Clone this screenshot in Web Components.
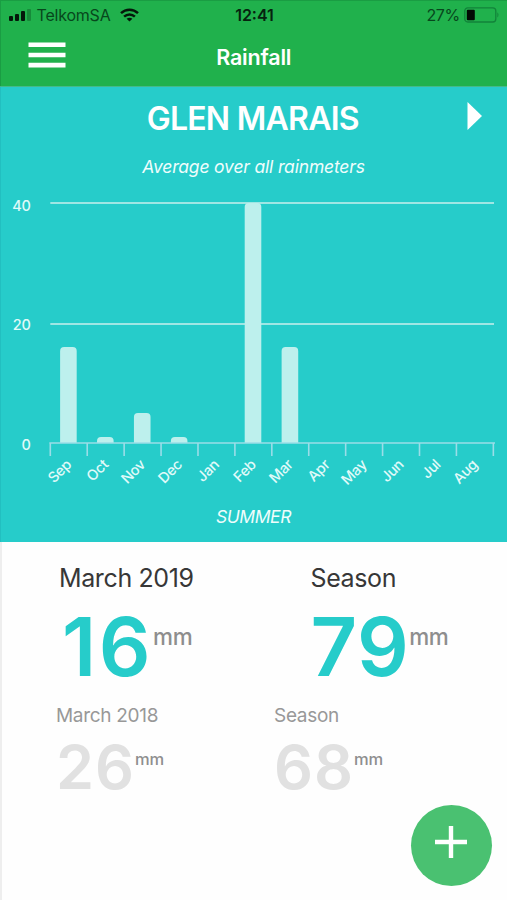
<!DOCTYPE html>
<html lang="en">
<head>
<meta charset="utf-8">
<meta name="viewport" content="width=device-width, initial-scale=1">
<title>Rainfall</title>
<style>
    html, body {
        margin: 0;
        height: 100%;
        overflow: hidden;
        background: #fefefe;
    }
    body {
        font-family: Inter, "Liberation Sans", sans-serif;
    }
</style>
</head>
<body>
<rainfall-app></rainfall-app>
<script>
class StatusBar extends HTMLElement {
    constructor() {
        super();
        this.attachShadow({mode: 'open'}).innerHTML = `
        <style>
            :host {
                display: grid;
                grid-template-columns: 1fr auto 1fr;
                align-items: center;
                height: 30px;
                padding: 0 7px 0 9px;
                box-sizing: border-box;
                font-size: 16px;
                line-height: 30px;
                color: #07471c;
            }
            .left, .right {
                display: flex;
                align-items: center;
            }
            .right {
                justify-content: flex-end;
                gap: 4px;
                letter-spacing: -0.3px;
            }
            .carrier {
                margin: 0 9px 0 5.5px;
                letter-spacing: -0.2px;
            }
            .time {
                font-weight: 600;
                color: #06230f;
            }
        </style>
        <div class="left">
            <svg width="22" height="14" viewBox="0 0 22 14">
                <g fill="#04170a">
                    <rect x="0" y="8" width="4" height="5" rx="1"/>
                    <rect x="6" y="6" width="4" height="7" rx="1"/>
                    <rect x="12" y="3" width="4" height="10" rx="1"/>
                </g>
                <rect x="18" y="1" width="4" height="12" rx="1" fill="#178a3a"/>
            </svg>
            <span class="carrier"><slot name="carrier"></slot></span>
            <svg width="19" height="14" viewBox="0 0 19 14" fill="none" stroke="#04170a" stroke-width="2.5">
                <path d="M1 5.2C5.8 .6 13.2 .6 18 5.2"/>
                <path d="M4.1 8.6C7.2 5.7 11.8 5.7 14.9 8.6"/>
                <path d="M9.5 13.6L6.6 10.7C8.3 9.3 10.7 9.3 12.4 10.7Z" fill="#04170a" stroke="none"/>
            </svg>
        </div>
        <span class="time"><slot name="time"></slot></span>
        <div class="right">
            <span><slot name="battery"></slot></span>
            <svg width="36" height="16" viewBox="0 0 36 16">
                <rect x=".8" y=".8" width="31" height="14.2" rx="3" fill="none" stroke="#12833a" stroke-width="1.3"/>
                <rect x="2.8" y="2.8" width="8" height="10.4" rx="1" fill="#020a04"/>
                <path d="M33.4 5.2q2.2 2.6 0 5.2z" fill="#12833a"/>
            </svg>
        </div>`;
    }
}

class NavBar extends HTMLElement {
    constructor() {
        super();
        this.attachShadow({mode: 'open'}).innerHTML = `
        <style>
            :host {
                display: grid;
                grid-template-columns: 1fr auto 1fr;
                height: 56px;
                padding: 0 27.5px 0 28px;
                color: #fff;
            }
            svg {
                margin-top: 12px;
            }
            h1 {
                margin: 12px 0 0;
                font-size: 21.5px;
                line-height: 30px;
                font-weight: 600;
                letter-spacing: -0.2px;
            }
        </style>
        <svg width="38" height="26" viewBox="0 0 38 26" fill="#fff">
            <path d="M.5 .5h37v4.6H.5zM.5 10.7h37v4.6H.5zM.5 20.8h37v4.6H.5z"/>
        </svg>
        <h1><slot></slot></h1>`;
    }
}

class RainChart extends HTMLElement {
    constructor() {
        super();
        this.shadow = this.attachShadow({mode: 'open'});
    }
    connectedCallback() {
        this.render();
    }
    get values() {
        return this.getAttribute('values').split(',').map(Number);
    }
    render() {
        const months = ['Sep', 'Oct', 'Nov', 'Dec', 'Jan', 'Feb', 'Mar', 'Apr', 'May', 'Jun', 'Jul', 'Aug'];
        const left = 50.3;
        const step = 36.92;
        const base = 253;
        const scale = 6;
        const grid = [20, 40].map(v => {
            const y = base - v * scale + (v === 20 ? 1 : 0);
            return `<path d="M${left} ${y}H494" stroke="#9fe6e4" stroke-width="2"/>`;
        }).join('');
        const bars = this.values.map((v, i) => {
            if (!v) {
                return '';
            }
            const x = left + i * step + 9.8;
            const top = base - v * scale;
            const r = Math.min(4, v * scale);
            return `<path d="M${x} ${base}V${top + r}q0-${r} ${r}-${r}h${16.6 - 2 * r}q${r} 0 ${r} ${r}V${base}z" fill="#bdf0ed"/>`;
        }).join('');
        let ticks = `M${left - 1} ${base}H495`;
        for (let i = 0; i <= 12; i++) {
            ticks += `M${left + i * step} ${base}v13`;
        }
        const labels = months.map((m, i) => {
            const x = left + i * step + 22;
            return `<text text-anchor="end" transform="translate(${x} 275.5) rotate(-45)">${m}</text>`;
        }).join('');
        this.shadow.innerHTML = `
        <style>
            :host {
                display: block;
                height: 310px;
            }
            svg {
                display: block;
            }
            text {
                font-size: 14.5px;
                font-weight: 500;
                letter-spacing: -0.3px;
                fill: #e0faf9;
            }
        </style>
        <svg width="507" height="310" viewBox="0 0 507 310">
            ${grid}
            ${bars}
            <path d="${ticks}" fill="none" stroke="#9bdde8" stroke-width="1.6"/>
            <text x="30.5" y="20.5" text-anchor="end">40</text>
            <text x="30.5" y="139.5" text-anchor="end">20</text>
            <text x="30.5" y="259.5" text-anchor="end">0</text>
            ${labels}
        </svg>`;
    }
}

class RainPanel extends HTMLElement {
    constructor() {
        super();
        this.attachShadow({mode: 'open'}).innerHTML = `
        <style>
            :host {
                display: flex;
                flex-direction: column;
                height: 456px;
                box-sizing: border-box;
                border-top: 1px solid #44b98a;
                background: #26ccca;
                box-shadow: inset 1px 0 #22bfc0;
                color: #fff;
                text-align: center;
            }
            header {
                display: grid;
                grid-template-columns: 1fr auto 1fr;
                padding: 12px 24px 0;
            }
            h2 {
                grid-column: 2;
                margin: 0 1.5px 0 0;
                font-size: 32px;
                line-height: 40px;
                font-weight: 600;
                letter-spacing: -0.75px;
            }
            svg {
                justify-self: end;
                margin-top: 3px;
            }
            .sub, .season {
                font-size: 17.5px;
                line-height: 24px;
                font-style: italic;
                color: #effdfc;
            }
            .sub {
                margin: 16px 0 11px;
                letter-spacing: -0.17px;
            }
            .season {
                margin-top: 5px;
                letter-spacing: -0.4px;
            }
        </style>
        <header>
            <h2><slot name="place"></slot></h2>
            <svg width="16" height="28" viewBox="0 0 16 28"><path d="M.5 0L15 14L.5 28z" fill="#fff"/></svg>
        </header>
        <div class="sub"><slot name="sub"></slot></div>
        <rain-chart values="16,1,5,1,0,40,16,0,0,0,0,0"></rain-chart>
        <div class="season"><slot name="season"></slot></div>`;
    }
}

class RainStat extends HTMLElement {
    constructor() {
        super();
        this.attachShadow({mode: 'open'}).innerHTML = `
        <style>
            :host {
                display: block;
                color: #373737;
            }
            .label {
                font-size: 25px;
                line-height: 30px;
                letter-spacing: -0.38px;
            }
            .row {
                display: flex;
                align-items: flex-start;
                margin-top: 14px;
            }
            .value {
                padding-left: var(--value-indent, 0);
                font-size: 81px;
                line-height: 80px;
                font-weight: 600;
                color: #26ccca;
                letter-spacing: var(--value-spacing, 0.5px);
            }
            .unit {
                margin-top: 18px;
                font-size: 22.5px;
                line-height: 24px;
                font-weight: 500;
                letter-spacing: -0.4px;
                color: #8e8e8e;
            }
            :host([previous]) .label {
                font-size: 19px;
                line-height: 24px;
                letter-spacing: -0.3px;
                color: #989898;
            }
            :host([previous]) .row {
                margin-top: 9px;
            }
            :host([previous]) .value {
                font-size: 61px;
                line-height: 60px;
                color: #e1e1e1;
            }
            :host([previous]) .unit {
                margin-top: 13px;
                font-size: 16.5px;
                line-height: 18px;
                letter-spacing: -0.3px;
            }
        </style>
        <div class="label"><slot name="label"></slot></div>
        <div class="row">
            <span class="value"><slot></slot></span>
            <span class="unit">mm</span>
        </div>`;
    }
}

class AddButton extends HTMLElement {
    constructor() {
        super();
        this.attachShadow({mode: 'open'}).innerHTML = `
        <style>
            :host {
                display: block;
                width: 81px;
                height: 81px;
                border-radius: 50%;
                background: #4ac171;
            }
            svg {
                display: block;
            }
        </style>
        <svg width="81" height="81" viewBox="0 0 81 81">
            <path d="M24 37h32M40 21v32" stroke="#fff" stroke-width="4.4"/>
        </svg>`;
    }
}

class RainfallApp extends HTMLElement {
    constructor() {
        super();
        this.attachShadow({mode: 'open'}).innerHTML = `
        <style>
            :host {
                display: block;
                position: relative;
                width: 507px;
                height: 900px;
                overflow: hidden;
                box-shadow: inset 2px 0 #eee;
            }
            .top {
                background: #20b14c;
                box-shadow: inset 1px 1px #1a9d43;
            }
            .stats {
                display: grid;
                grid-template-columns: 251.5px 1fr;
                padding: 20.5px 0 0 59px;
            }
            .stats.previous {
                grid-template-columns: 218px 1fr;
                padding: 17.5px 0 0 56px;
            }
            .month {
                --value-indent: 3px;
                --value-spacing: 2.5px;
            }
            .previous rain-stat {
                --value-spacing: 1px;
            }
            add-button {
                position: absolute;
                right: 15px;
                bottom: 14px;
            }
        </style>
        <div class="top">
            <status-bar>
                <span slot="carrier">TelkomSA</span>
                <span slot="time">12:41</span>
                <span slot="battery">27%</span>
            </status-bar>
            <nav-bar>Rainfall</nav-bar>
        </div>
        <rain-panel>
            <span slot="place">GLEN MARAIS</span>
            <span slot="sub">Average over all rainmeters</span>
            <span slot="season">SUMMER</span>
        </rain-panel>
        <div class="stats">
            <rain-stat class="month"><span slot="label">March 2019</span>16</rain-stat>
            <rain-stat><span slot="label">Season</span>79</rain-stat>
        </div>
        <div class="stats previous">
            <rain-stat previous><span slot="label">March 2018</span>26</rain-stat>
            <rain-stat previous><span slot="label">Season</span>68</rain-stat>
        </div>
        <add-button></add-button>`;
    }
}

customElements.define('status-bar', StatusBar);
customElements.define('nav-bar', NavBar);
customElements.define('rain-chart', RainChart);
customElements.define('rain-panel', RainPanel);
customElements.define('rain-stat', RainStat);
customElements.define('add-button', AddButton);
customElements.define('rainfall-app', RainfallApp);
</script>
</body>
</html>
